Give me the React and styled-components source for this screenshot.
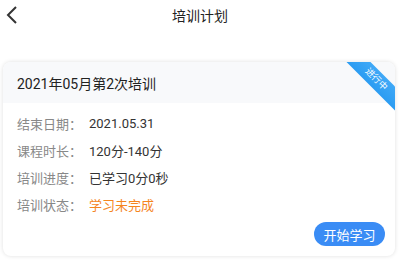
import React from 'react'
import styled, { createGlobalStyle } from 'styled-components'

const Global = createGlobalStyle`
	html, body {
		margin: 0;
		padding: 0;
		background: #fff;
		font-family: Roboto, "Noto Sans CJK SC", sans-serif;
	}
`

const Page = styled.div`
	width: 400px;
	height: 261px;
	overflow: hidden;
	background: #fff;
`

const NavBar = styled.div`
	height: 30px;
	display: flex;
	align-items: center;
	justify-content: center;
	position: relative;
	font-size: 14px;
	color: #222;
`

const Back = styled.svg`
	position: absolute;
	left: 6px;
	top: 5px;
`

const Body = styled.div`
	padding: 32px 5px 0 3px;
`

const Card = styled.div`
	position: relative;
	overflow: hidden;
	border-radius: 8px;
	background: #fff;
	box-shadow: 0 0 4px rgba(0, 0, 0, 0.13);
	height: 194px;
	display: flex;
	flex-direction: column;
`

const CardHead = styled.div`
	height: 41px;
	background: #f8f9fb;
	display: flex;
	align-items: center;
	padding-left: 14px;
	font-size: 14px;
	color: #222;
`

const Ribbon = styled.div`
	position: absolute;
	top: 9px;
	right: -23px;
	width: 84px;
	height: 17px;
	background: linear-gradient(#3fa9f7, #2c9cf2);
	color: #fff;
	font-size: 9px;
	line-height: 17px;
	text-align: center;
	transform: rotate(45deg);
`

const Rows = styled.div`
	padding: 7px 14px 0;
	display: flex;
	flex-direction: column;
`

const Row = styled.div`
	display: flex;
	height: 27px;
	align-items: center;
	font-size: 13px;
`

const Label = styled.span`
	width: 72px;
	color: #888;
`

const Value = styled.span`
	color: ${p => (p.warn ? '#f5851f' : '#333')};
`

const Footer = styled.div`
	display: flex;
	justify-content: flex-end;
	padding: 4px 10px 0 0;
`

const Button = styled.div`
	width: 71px;
	height: 24px;
	border-radius: 12px;
	background: #3a8cf5;
	color: #fff;
	font-size: 13px;
	display: flex;
	align-items: center;
	justify-content: center;
`

const rows = [
	['结束日期：', '2021.05.31'],
	['课程时长：', '120分-140分'],
	['培训进度：', '已学习0分0秒'],
	['培训状态：', '学习未完成', true],
]

export default function App() {
	return (
		<Page>
			<Global />
			<NavBar>
				<Back width="14" height="20" viewBox="0 0 14 20">
					<path d="M10 2 L2 10 L10 18" fill="none" stroke="#333" strokeWidth="2" />
				</Back>
				培训计划
			</NavBar>
			<Body>
				<Card>
					<CardHead>2021年05月第2次培训</CardHead>
					<Ribbon>进行中</Ribbon>
					<Rows>
						{rows.map(([l, v, w]) => (
							<Row key={l}>
								<Label>{l}</Label>
								<Value warn={w}>{v}</Value>
							</Row>
						))}
					</Rows>
					<Footer>
						<Button>开始学习</Button>
					</Footer>
				</Card>
			</Body>
		</Page>
	)
}
